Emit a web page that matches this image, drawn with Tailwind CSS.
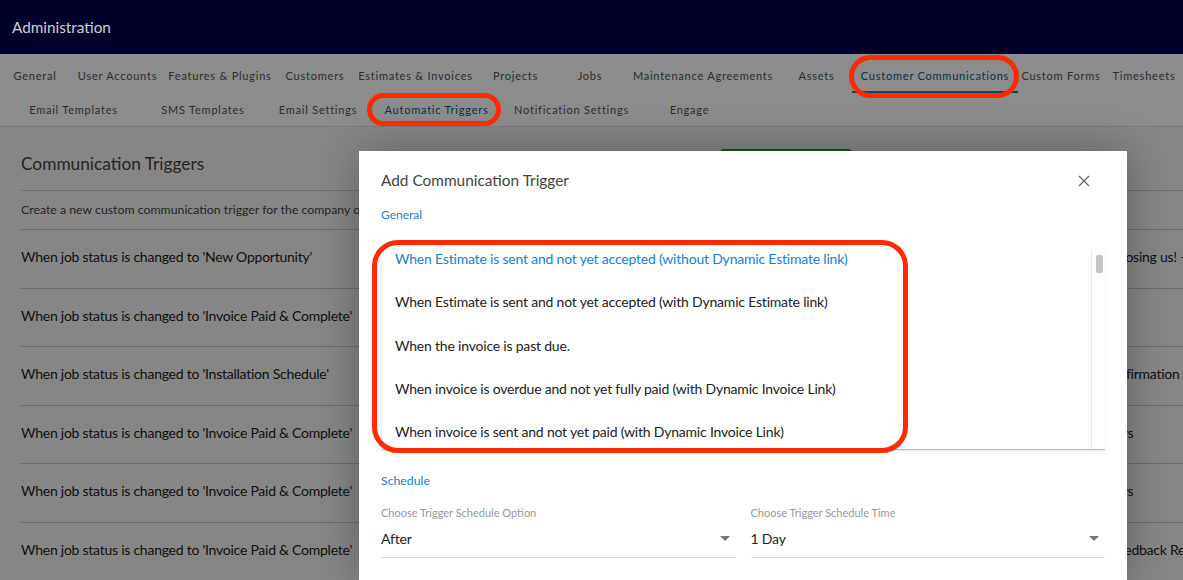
<!DOCTYPE html>
<html lang="en">
<head>
    <meta charset="UTF-8">
    <title>Administration - Automatic Triggers</title>
    <script src="https://cdn.jsdelivr.net/npm/@tailwindcss/browser@4"></script>
</head>
<body class="bg-white">
<div class="relative w-[1183px] h-[580px] overflow-hidden font-['Lato','Noto_Sans',sans-serif] text-[#222]">
    <!-- page under the dialog -->
    <header class="relative z-20 h-[54px] bg-[#00002b] flex items-center px-3 text-[15.3px] text-[#cfcfd6]">Administration</header>

    <nav class="h-[73px] pt-[5px] bg-white border-b border-[#e2e2e2] text-[11px] tracking-[0.07em] text-[#555]">
        <div class="flex h-[34px]">
            <a class="w-[70px] shrink-0 flex items-center justify-center">General</a>
            <a class="w-[95px] shrink-0 flex items-center justify-center">User Accounts</a>
            <a class="w-[110px] shrink-0 flex items-center justify-center">Features &amp; Plugins</a>
            <a class="w-[80px] shrink-0 flex items-center justify-center">Customers</a>
            <a class="w-[121px] shrink-0 flex items-center justify-center">Estimates &amp; Invoices</a>
            <a class="w-[79px] shrink-0 flex items-center justify-center">Projects</a>
            <a class="w-[70px] shrink-0 flex items-center justify-center">Jobs</a>
            <a class="w-[156px] shrink-0 flex items-center justify-center">Maintenance Agreements</a>
            <a class="w-[71px] shrink-0 flex items-center justify-center">Assets</a>
            <a class="w-[166px] shrink-0 flex items-center justify-center pt-[2px] text-[#0b5c94] border-b-2 border-[#1a7fb0]">Customer Communications</a>
            <a class="w-[86px] shrink-0 flex items-center justify-center">Custom Forms</a>
            <a class="w-[80px] shrink-0 flex items-center justify-center">Timesheets</a>
        </div>
        <div class="flex h-[34px]">
            <a class="w-[147px] shrink-0 flex items-center justify-center">Email Templates</a>
            <a class="w-[112px] shrink-0 flex items-center justify-center">SMS Templates</a>
            <a class="w-[118px] shrink-0 flex items-center justify-center">Email Settings</a>
            <a class="w-[119px] shrink-0 flex items-center justify-center text-[#0b5c94]">Automatic Triggers</a>
            <a class="w-[151px] shrink-0 flex items-center justify-center">Notification Settings</a>
            <a class="w-[85px] shrink-0 flex items-center justify-center">Engage</a>
        </div>
    </nav>

    <main class="pl-[21px] h-[453px] bg-[#f4f4f4]">
        <div class="flex h-[64px] border-b border-[#c8c8c8]">
            <h1 class="w-[699px] pt-[26px] text-[17.3px] leading-[21px] text-[#444]">Communication Triggers</h1>
            <button class="w-[132px] h-[36px] mt-[22px] rounded-t-sm bg-[#2e9e46]"></button>
        </div>
        <p class="h-[39px] flex items-center border-b border-[#c8c8c8] text-[12.3px] text-[#444] whitespace-nowrap">Create a new custom communication trigger for the company of</p>
        <div class="h-[58.5px] pb-[4px] flex items-center border-b border-[#c8c8c8] text-[14px] tracking-[-0.25px] whitespace-nowrap">
            <span class="w-[900px] shrink-0">When job status is changed to 'New Opportunity'</span>
            <span class="pl-[117px]">Thanks for choosing us! -</span>
        </div>
        <div class="h-[58.5px] pb-[4px] flex items-center border-b border-[#c8c8c8] text-[14px] tracking-[-0.25px] whitespace-nowrap">
            <span class="w-[900px] shrink-0">When job status is changed to 'Invoice Paid &amp; Complete'</span>
        </div>
        <div class="h-[58.5px] pb-[4px] flex items-center border-b border-[#c8c8c8] text-[14px] tracking-[-0.25px] whitespace-nowrap">
            <span class="w-[900px] shrink-0">When job status is changed to 'Installation Schedule'</span>
            <span class="pl-[143px]">Install Confirmation -</span>
        </div>
        <div class="h-[58.5px] pb-[4px] flex items-center border-b border-[#c8c8c8] text-[14px] tracking-[-0.25px] whitespace-nowrap">
            <span class="w-[900px] shrink-0">When job status is changed to 'Invoice Paid &amp; Complete'</span>
            <span class="pl-[183px]">Days</span>
        </div>
        <div class="h-[58.5px] pb-[4px] flex items-center border-b border-[#c8c8c8] text-[14px] tracking-[-0.25px] whitespace-nowrap">
            <span class="w-[900px] shrink-0">When job status is changed to 'Invoice Paid &amp; Complete'</span>
            <span class="pl-[183px]">Days</span>
        </div>
        <div class="h-[58.5px] pb-[4px] flex items-center text-[14px] tracking-[-0.25px] whitespace-nowrap">
            <span class="w-[900px] shrink-0">When job status is changed to 'Invoice Paid &amp; Complete'</span>
            <span class="pl-[128px]">Customer Feedback Request</span>
        </div>
    </main>

    <!-- dim layer, starts under the header -->
    <div class="absolute inset-0 z-10 bg-black/45"></div>

    <!-- dialog -->
    <section class="absolute z-20 left-[359px] top-[151px] w-[768px] h-[429px] bg-white px-[22px] shadow-[0_0_40px_rgba(0,0,0,0.3)]">
        <div class="flex items-center justify-between h-[58px] pt-[2px] pr-[15px]">
            <h2 class="text-[15.4px] text-[#444]">Add Communication Trigger</h2>
            <svg class="w-[12px] h-[12px] text-[#666]" viewBox="0 0 12 12" fill="none" stroke="currentColor" stroke-width="1.3"><path d="M1 1l10 10M11 1L1 11"/></svg>
        </div>
        <h3 class="h-[12px] flex items-center text-[12px] text-[#1a7fc9]">General</h3>

        <div class="mt-[29px] relative h-[200px] w-[724px] border-b border-[#bbb] border-l border-l-[#eee] shadow-[0_1px_2px_rgba(0,0,0,0.12)] overflow-hidden">
            <ul class="pl-[13px] -mt-[13px] text-[14px] tracking-[-0.2px] whitespace-nowrap">
                <li class="h-[43.3px] flex items-center text-[#1a7fc9]">When Estimate is sent and not yet accepted (without Dynamic Estimate link)</li>
                <li class="h-[43.3px] flex items-center">When Estimate is sent and not yet accepted (with Dynamic Estimate link)</li>
                <li class="h-[43.3px] flex items-center">When the invoice is past due.</li>
                <li class="h-[43.3px] flex items-center">When invoice is overdue and not yet fully paid (with Dynamic Invoice Link)</li>
                <li class="h-[43.3px] flex items-center">When invoice is sent and not yet paid (with Dynamic Invoice Link)</li>
            </ul>
            <div class="absolute right-0 top-0 bottom-0 w-[14px] border-l border-[#e8e8e8]">
                <div class="ml-[4px] mt-[5px] w-[7px] h-[18px] rounded-[2px] bg-[#c4c4c4]"></div>
            </div>
        </div>

        <h3 class="mt-[24px] h-[14px] flex items-center text-[12.3px] text-[#1a7fc9]">Schedule</h3>
        <div class="mt-[18px] flex gap-[15px] w-[724px]">
            <div class="flex-1">
                <label class="block text-[11px] leading-[14px] text-[#999]">Choose Trigger Schedule Option</label>
                <div class="mt-[5px] h-[33px] pb-[5px] flex items-center justify-between border-b border-[#ddd] pr-[6px] text-[14px] tracking-[-0.2px]">
                    After
                    <span class="w-0 h-0 border-x-[5px] border-x-transparent border-t-[5px] border-t-[#777]"></span>
                </div>
            </div>
            <div class="flex-1">
                <label class="block text-[11px] leading-[14px] text-[#999]">Choose Trigger Schedule Time</label>
                <div class="mt-[5px] h-[33px] pb-[5px] flex items-center justify-between border-b border-[#ddd] pr-[6px] text-[14px] tracking-[-0.2px]">
                    1 Day
                    <span class="w-0 h-0 border-x-[5px] border-x-transparent border-t-[5px] border-t-[#777]"></span>
                </div>
            </div>
        </div>
    </section>

    <!-- red annotations drawn over the screenshot -->
    <div class="absolute z-30 left-[849px] top-[55px] w-[170px] h-[43px] rounded-[22px] border-[5px] border-[#ff2a00]"></div>
    <div class="absolute z-30 left-[367px] top-[93px] w-[134px] h-[33px] rounded-[17px] border-[5px] border-[#ff2a00]"></div>
    <div class="absolute z-30 left-[372px] top-[240px] w-[536px] h-[213px] rounded-[26px] border-[5px] border-[#ff2a00]"></div>
</div>
</body>
</html>
